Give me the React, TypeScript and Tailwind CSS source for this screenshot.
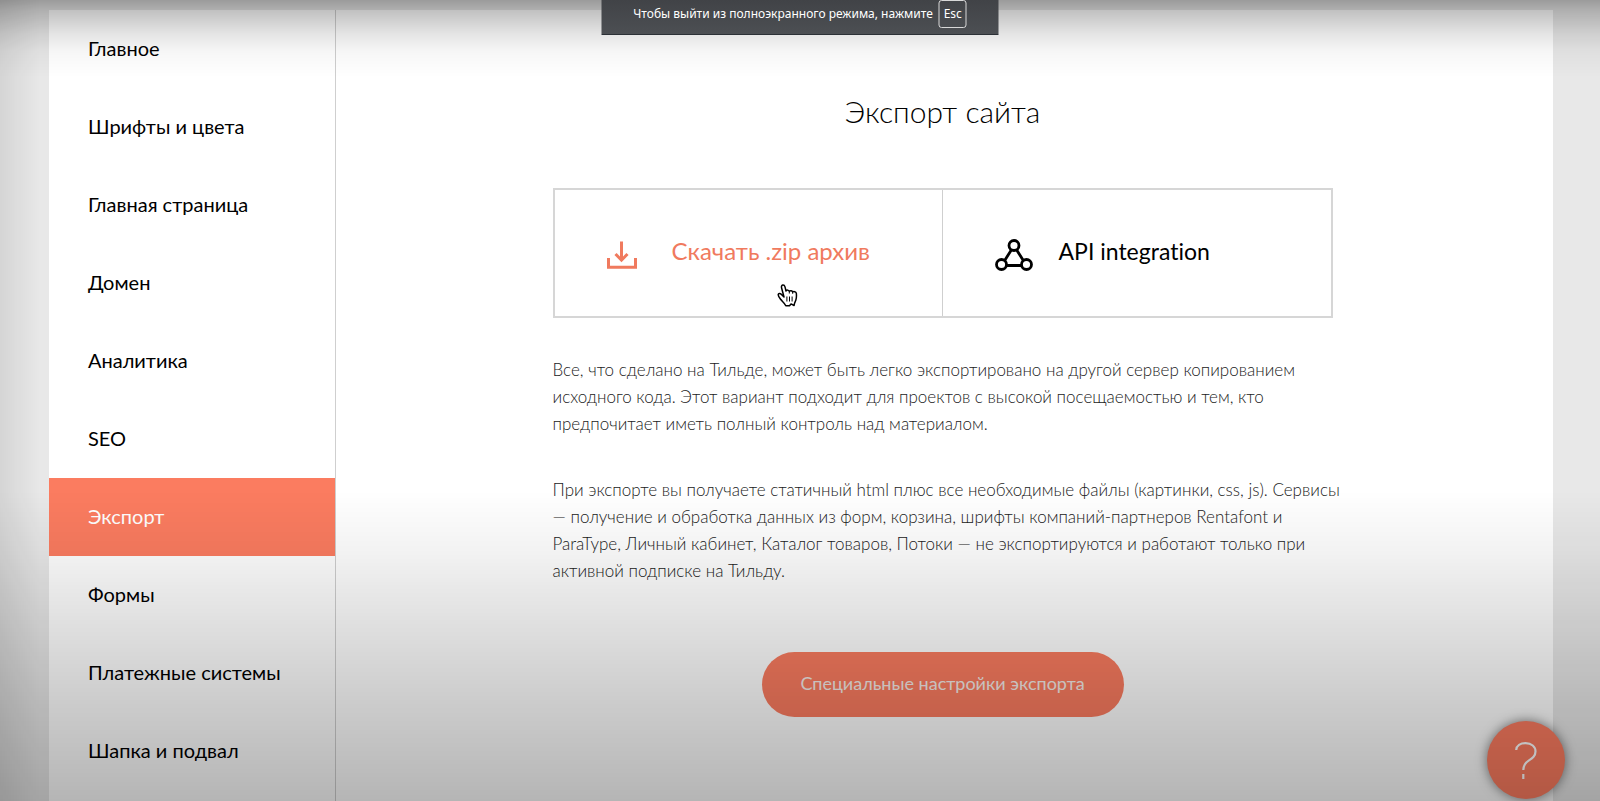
const navItems = [
  "Главное",
  "Шрифты и цвета",
  "Главная страница",
  "Домен",
  "Аналитика",
  "SEO",
  "Экспорт",
  "Формы",
  "Платежные системы",
  "Шапка и подвал",
]

function DownloadIcon() {
  return <svg className="mt-1" width="30" height="28" viewBox="0 0 30 28" fill="none" stroke="currentColor" aria-hidden="true">
    <path d="M1.5 17v9.3h27V17" strokeWidth="3"/>
    <path d="M14.5 0.5v18M8.5 13l6 6.2 6-6.2" strokeWidth="3"/>
  </svg>
}

function ApiIcon() {
  return <svg className="mt-1" width="38" height="32" viewBox="0 0 38 32" fill="none" stroke="currentColor" strokeWidth="2.8" aria-hidden="true">
    <circle cx="19" cy="6.5" r="5"/>
    <circle cx="6.5" cy="25.5" r="5"/>
    <circle cx="31.5" cy="25.5" r="5"/>
    <path d="M16.3 11L10 21M21.7 11L28 21M12 26.5h14"/>
  </svg>
}

function HandCursor() {
  return <svg className="absolute left-[222px] top-[94px]" width="21" height="23" viewBox="0 0 21 23" fill="#fff" stroke="#000" strokeWidth="1.5" strokeLinejoin="round" aria-hidden="true">
    <path d="M7 13L4.6 4C4.2 2.4 4.7 1.200 5.700 1c1.100-.2 1.900.5 2.300 1.900L9 7C9.600 5.800 11.700 5.800 12.300 7.200c1-.9 2.900-.6 3.400.7 1.100-.6 3.200-.3 3.600 1.200.3 2.600.2 5.200-.5 7.200-.5 1.500-1.500 2.500-1.700 5.200l-3.100-1.600-1.500 1.800H8.800C7.600 18.900 5.200 17.400 3.600 15.300 2.500 13.800 1.100 12 1.200 10.600c.2-1.300 1.800-1.400 3-.4z"/>
    <path d="M9.900 12.500v5M12.500 12.500v5M15.100 12.500v5M12.300 7v2.500M15.700 7.800v2" strokeWidth="1"/>
  </svg>
}

function Sidebar() {
  return <nav className="w-[287px] shrink-0 border-r border-[#cfcfcf]">
    {navItems.map(item => {
      const active = item === "Экспорт"
      return <a
        key={item}
        href="#"
        aria-current={active ? "page" : undefined}
        className={`flex h-[78px] items-center pb-[2px] pl-[39px] text-[20px] leading-7 ${active ? "bg-[#fb7c60] text-white" : "text-black"}`}
      >{item}</a>
    })}
  </nav>
}

function FullscreenHint() {
  return <div className="fixed left-1/2 top-0 z-30 flex h-[35px] w-[397px] -translate-x-1/2 justify-center gap-[6px] border-b border-[#2b3036] bg-linear-to-b from-[#414347] to-[#4c4f53] font-['Noto_Sans','Open_Sans',sans-serif] text-[12px] text-white">
    <span className="pt-[5px] leading-[18px]">Чтобы выйти из полноэкранного режима, нажмите</span>
    <kbd className="h-[28px] w-[28px] rounded-[3px] border border-[#d8d8d8] text-center font-['Noto_Sans','Open_Sans',sans-serif] leading-[26px]">Esc</kbd>
  </div>
}

// Darkening of the player's controls, laid over the whole page
function PlayerShade() {
  return <div className="pointer-events-none fixed inset-0 z-20">
    <div className="absolute inset-x-0 top-0 h-[78px] bg-[linear-gradient(to_bottom,rgba(0,0,0,.33),rgba(0,0,0,.24)_14%,rgba(0,0,0,.1)_44%,rgba(0,0,0,.03)_68%,transparent)]"/>
    <div className="absolute inset-x-0 bottom-0 h-[310px] bg-[linear-gradient(to_bottom,transparent,rgba(0,0,0,.05)_20%,rgba(0,0,0,.1)_36%,rgba(0,0,0,.2)_68%,rgba(0,0,0,.29))]"/>
    <div className="absolute inset-y-0 left-0 w-10 bg-linear-to-r from-black/8 to-transparent"/>
  </div>
}

export default function App() {
  return <div className="min-h-screen bg-[#e8e8e8] pl-[49px] pr-[47px] pt-[10px] font-['Lato',sans-serif] [font-variant-ligatures:none]">
    <FullscreenHint/>
    <div className="flex min-h-[calc(100vh-10px)] bg-white">
      <Sidebar/>
      <main className="flex min-w-0 flex-1 flex-col items-center pl-6 pr-7 pt-[81px]">
        <h1 className="text-[30px] font-light leading-[40px] text-black">Экспорт сайта</h1>
        <div className="mt-[57px] grid w-full max-w-[780px] grid-cols-2 border-2 border-[#d6d6d6]">
          <button type="button" className="relative flex h-[126px] items-center gap-[35px] border-r border-[#cfcfcf] pl-[52px] text-[#f07a5e]">
            <DownloadIcon/>
            <span className="pb-1 text-[24px] leading-8">Скачать .zip архив</span>
            <HandCursor/>
          </button>
          <button type="button" className="flex h-[126px] items-center gap-[26px] pl-[52px] text-black">
            <ApiIcon/>
            <span className="pb-1 text-[23px] leading-8">API integration</span>
          </button>
        </div>
        <div className="mt-[38px] flex w-full max-w-[780px] flex-col gap-[39px] whitespace-nowrap text-[17px] font-light leading-[27px] text-[#222]">
          <p>
            Все, что сделано на Тильде, может быть легко экспортировано на другой сервер копированием<br/>
            исходного кода. Этот вариант подходит для проектов с высокой посещаемостью и тем, кто<br/>
            предпочитает иметь полный контроль над материалом.
          </p>
          <p>
            При экспорте вы получаете статичный html плюс все необходимые файлы (картинки, css, js). Сервисы<br/>
            — получение и обработка данных из форм, корзина, шрифты компаний-партнеров Rentafont и<br/>
            ParaType, Личный кабинет, Каталог товаров, Потоки — не экспортируются и работают только при<br/>
            активной подписке на Тильду.
          </p>
        </div>
        <button type="button" className="mt-[68px] h-[65px] w-[362px] rounded-full bg-[#fb7c60] pb-1 text-[18px] leading-7 text-[#f4ece8]">
          Специальные настройки экспорта
        </button>
      </main>
    </div>
    <button type="button" aria-label="Помощь" className="fixed bottom-[2px] right-[35px] z-10 flex h-[78px] w-[78px] items-center justify-center rounded-full bg-[#fb7c60] text-white shadow-[0_0_12px_rgba(0,0,0,.5)]">
      <svg width="22" height="37" viewBox="0 0 22 37" fill="none" stroke="currentColor" strokeWidth="2.2" aria-hidden="true">
        <path d="M1.2 8C1.5 3.5 5.5 1.2 10.5 1.2c6 0 10 3.3 10 8.3 0 4.5-3 6.5-6.5 8.800-4 2.600-5.700 4.700-5.700 9.700M8.300 32v5"/>
      </svg>
    </button>
    <PlayerShade/>
  </div>
}
